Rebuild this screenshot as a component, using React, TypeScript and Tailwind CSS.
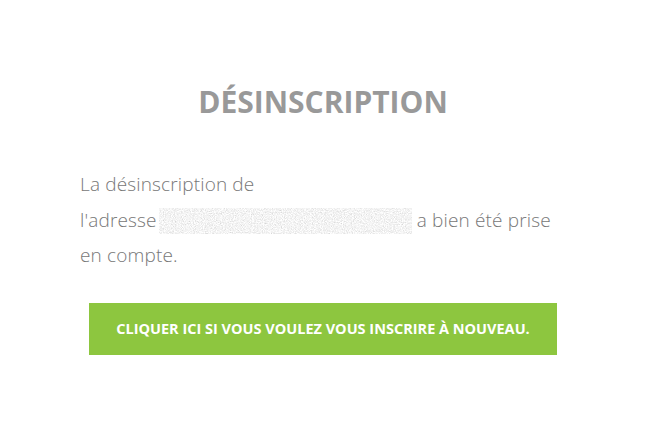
export default function App() {
  return (
    <div className="min-h-[421px] w-full bg-white font-['Open_Sans',sans-serif]">
      <div className="mx-auto w-[490px] pt-[80px]">
        <h1 className="pr-[4px] text-center text-[30px] font-bold leading-[44px] text-[#999999]">
          DÉSINSCRIPTION
        </h1>
        <p className="mt-[43px] text-[19px] font-light leading-[35.5px] tracking-[0.15px] text-[#777777]">
          La désinscription de{' '}
          <span className="whitespace-nowrap">
            l'adresse
            <span className="ml-[2px] inline-block h-[26px] w-[253px] align-middle">
              <svg width="253" height="26" className="block">
                <filter id="noise" x="0" y="0" width="100%" height="100%">
                  <feTurbulence type="fractalNoise" baseFrequency="0.9" numOctaves="3" seed="7" />
                  <feColorMatrix
                    type="matrix"
                    values="0.4 0.4 0 0 0.5  0.4 0.4 0 0 0.5  0.4 0.4 0 0 0.5  0 0 0 0 1"
                  />
                </filter>
                <rect width="253" height="26" filter="url(#noise)" />
              </svg>
            </span>
          </span>{' '}
          a bien été prise en compte.
        </p>
        <div className="mt-[29px] flex">
          <button className="ml-[9px] h-[52px] w-[468px] bg-[#8dc63f] text-[14.5px] font-bold text-white">
            CLIQUER ICI SI VOUS VOULEZ VOUS INSCRIRE À NOUVEAU.
          </button>
        </div>
      </div>
    </div>
  )
}
